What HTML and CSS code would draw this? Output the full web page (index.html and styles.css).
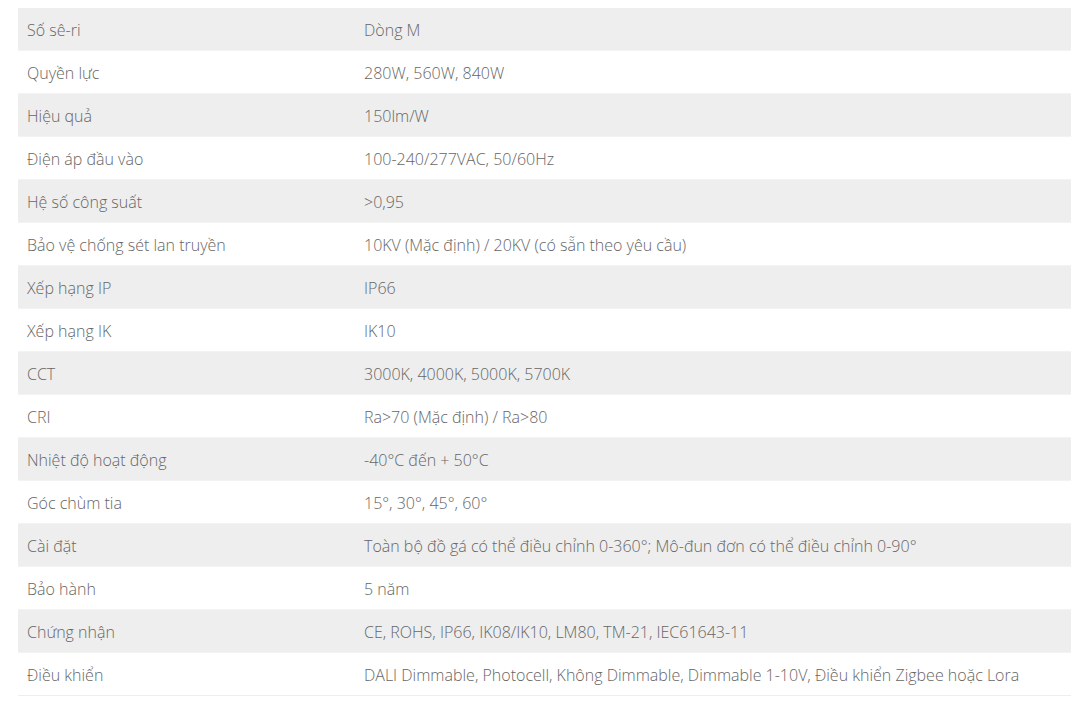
FILE: index.html
```html
<!DOCTYPE html>
<html lang="vi">
<head>
<meta charset="utf-8">
<title>Thông số kỹ thuật</title>
<link rel="stylesheet" href="styles.css">
</head>
<body>
<table class="spec">
<tbody>
<tr><td class="k">Số sê-ri</td><td>Dòng M</td></tr>
<tr><td class="k">Quyền lực</td><td>280W, 560W, 840W</td></tr>
<tr><td class="k">Hiệu quả</td><td>150lm/W</td></tr>
<tr><td class="k">Điện áp đầu vào</td><td>100-240/277VAC, 50/60Hz</td></tr>
<tr><td class="k">Hệ số công suất</td><td>&gt;0,95</td></tr>
<tr><td class="k">Bảo vệ chống sét lan truyền</td><td>10KV (Mặc định) / 20KV (có sẵn theo yêu cầu)</td></tr>
<tr><td class="k">Xếp hạng IP</td><td>IP66</td></tr>
<tr><td class="k">Xếp hạng IK</td><td>IK10</td></tr>
<tr><td class="k">CCT</td><td>3000K, 4000K, 5000K, 5700K</td></tr>
<tr><td class="k">CRI</td><td>Ra&gt;70 (Mặc định) / Ra&gt;80</td></tr>
<tr><td class="k">Nhiệt độ hoạt động</td><td>-40°C đến + 50°C</td></tr>
<tr><td class="k">Góc chùm tia</td><td>15°, 30°, 45°, 60°</td></tr>
<tr><td class="k">Cài đặt</td><td>Toàn bộ đồ gá có thể điều chỉnh 0-360°; Mô-đun đơn có thể điều chỉnh 0-90°</td></tr>
<tr><td class="k">Bảo hành</td><td>5 năm</td></tr>
<tr><td class="k">Chứng nhận</td><td>CE, ROHS, IP66, IK08/IK10, LM80, TM-21, IEC61643-11</td></tr>
<tr><td class="k">Điều khiển</td><td>DALI Dimmable, Photocell, Không Dimmable, Dimmable 1-10V, Điều khiển Zigbee hoặc Lora</td></tr>
</tbody>
</table>
</body>
</html>
```
FILE: styles.css
```css
html, body {
  margin: 0;
  padding: 0;
  background: #fff;
}
body {
  padding: 8px 0 0 18px;
  font-family: "Open Sans", "Liberation Sans", sans-serif;
  font-weight: 300;
  font-size: 16px;
  color: #666;
  overflow: hidden;
}
.spec {
  border-collapse: collapse;
  width: 1053px;
  table-layout: fixed;
}
.spec td {
  height: 40px;
  padding: 2px 9px 0;
  border-bottom: 1px solid #f3f3f3;
  vertical-align: middle;
  white-space: nowrap;
  line-height: 20px;
}
.spec td.k {
  width: 319px;
}
.spec tr:nth-child(odd) td {
  background: #eeeeee;
}
.spec tr:last-child td {
  border-bottom-color: #eeeeee;
}
```
